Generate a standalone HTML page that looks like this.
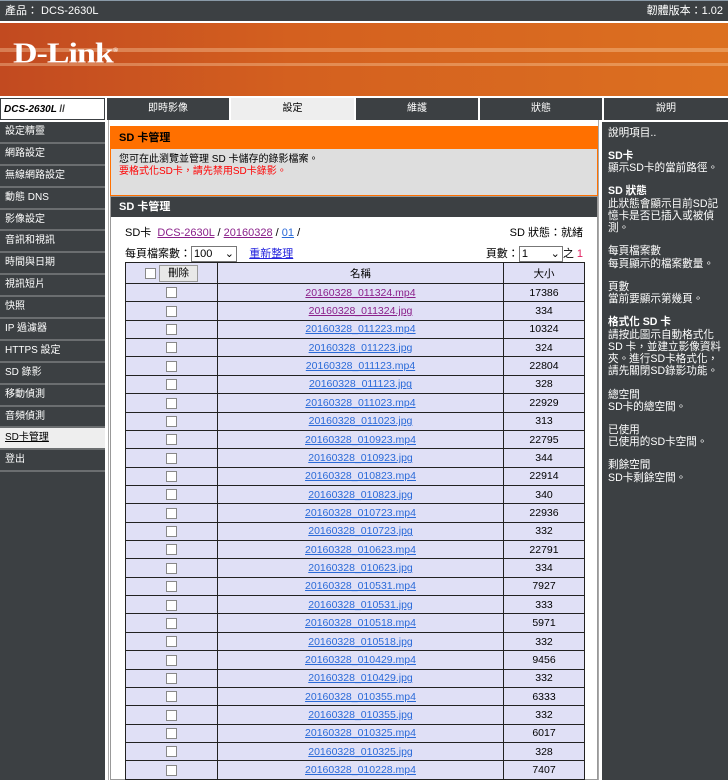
<!DOCTYPE html><html><head><meta charset="utf-8"><style>
*{margin:0;padding:0;box-sizing:border-box}
body{width:728px;height:780px;overflow:hidden;background:#fff;font-family:"Liberation Sans","Noto Sans CJK TC",sans-serif;font-size:11px;color:#000;position:relative}
.abs{position:absolute}
#top{left:0;top:0;width:728px;height:21px;background:#3c4043;color:#fff;font-size:11px;line-height:21px;border-top:1px solid #8a9aa8}
#banner{left:0;top:23px;width:728px;height:73px;background:linear-gradient(90deg,#c24a20 0%,#d4601f 40%,#dc7020 100%);overflow:hidden}
.stripe{position:absolute;left:0;width:100%;height:4px;background:rgba(255,220,180,.35)}
#logo{color:#fff;font-family:"Liberation Serif",serif;font-weight:bold;font-size:34px;letter-spacing:-1px;transform:scaleY(.85)}
.tab{position:absolute;top:98px;height:22px;background:#3c4043;color:#fff;text-align:center;line-height:22px;font-size:10px}
#side{left:0;top:122px;width:105px;height:658px;background:#3c4043}
.si{height:21.9px;line-height:20px;color:#fff;padding-left:5px;font-size:10px;border-bottom:2px solid #6b6e70}
#help{left:602px;top:122px;width:126px;height:658px;background:#3c4043;color:#fff;padding:5px 6px 5px 6px;font-size:10.6px;line-height:12.3px}
#help p{margin-bottom:10.8px}
a{color:#2a6ad8}
a.v{color:#8a1f8a}
table{border-collapse:collapse}
td{border:1px solid #222;background:#e0e0f6;height:18.37px;text-align:center;font-size:10.5px;padding:0}
.cb{display:inline-block;width:11px;height:11px;border:1px solid #888;background:#fff;vertical-align:middle}
</style></head><body>
<div id="top" class="abs"><span style="padding-left:5px">產品： DCS-2630L</span><span style="position:absolute;right:5px">韌體版本：1.02</span></div>
<div id="banner" class="abs"><div class="stripe" style="top:25px"></div><div class="stripe" style="top:40px;height:3px"></div>
<div id="logo" class="abs" style="top:12px;left:13px">D-Link<sup style="font-size:7px">®</sup></div></div>
<div class="tab" style="left:0;width:105px;background:#fff;border:1px solid #3c4043;color:#000;text-align:left;padding-left:3px;font-style:italic;font-weight:bold;font-size:10px">DCS-2630L <span style="font-style:normal;color:#333">//</span></div>
<div class="tab" style="left:107px;width:122px">即時影像</div>
<div class="tab" style="left:231px;width:123px;background:#eee;color:#000">設定</div>
<div class="tab" style="left:356px;width:122px">維護</div>
<div class="tab" style="left:480px;width:122px">狀態</div>
<div class="tab" style="left:604px;width:124px">說明</div>
<div id="side" class="abs">
<div class="si">設定精靈</div><div class="si">網路設定</div><div class="si">無線網路設定</div><div class="si">動態 DNS</div><div class="si">影像設定</div><div class="si">音訊和視訊</div><div class="si">時間與日期</div><div class="si">視訊短片</div><div class="si">快照</div><div class="si">IP 過濾器</div><div class="si">HTTPS 設定</div><div class="si">SD 錄影</div><div class="si">移動偵測</div><div class="si">音頻偵測</div><div class="si" style="background:#eee;color:#000;text-decoration:underline">SD卡管理</div><div class="si">登出</div>
</div>
<div class="abs" style="left:108px;top:120px;width:1px;height:660px;background:#aaa"></div>
<div class="abs" style="left:598px;top:120px;width:1px;height:660px;background:#aaa"></div>
<div class="abs" style="left:110px;top:126px;width:488px;height:70px;border:1px solid #ff7000;background:#dedede">
<div style="background:#ff7000;height:22px;line-height:22px;color:#000;font-weight:bold;padding-left:8px;font-size:11px">SD 卡管理</div>
<div style="padding:5px 8px;font-size:10px;line-height:12px">您可在此瀏覽並管理 SD 卡儲存的錄影檔案。<br><span style="color:#f00">要格式化SD卡，請先禁用SD卡錄影。</span></div></div>
<div class="abs" style="left:110px;top:196px;width:488px;height:584px;border:1px solid #999;background:#fff">
<div style="background:#3c4043;height:20px;line-height:20px;color:#fff;font-weight:bold;padding-left:8px">SD 卡管理</div>
<div class="abs" style="left:14px;top:27px">SD卡 &nbsp;<a class="v" href="#">DCS-2630L</a> / <a class="v" href="#">20160328</a> / <a href="#">01</a> /</div>
<div class="abs" style="right:14px;top:27px">SD 狀態：就緒</div>
<div class="abs" style="left:14px;top:48px">每頁檔案數：<span style="display:inline-block;width:46px;height:16px;border:1px solid #777;vertical-align:middle;padding-left:2px;line-height:14px">100 <span style="float:right;padding-right:2px">⌄</span></span> &nbsp; &nbsp;<a href="#" style="color:#22d">重新整理</a></div>
<div class="abs" style="right:14px;top:48px">頁數：<span style="display:inline-block;width:44px;height:16px;border:1px solid #777;vertical-align:middle;padding-left:2px;line-height:14px;text-align:left">1 <span style="float:right;padding-right:2px">⌄</span></span>之 <span style="color:#e02060">1</span></div>
<table class="abs" style="left:14px;top:65px;width:460px"><tbody id="tb">
<tr><td style="width:92px;height:21px"><span class="cb"></span> <span style="display:inline-block;border:1px solid #999;background:#e8e8e8;padding:0 8px;line-height:15px;vertical-align:middle">刪除</span></td><td style="width:286px">名稱</td><td>大小</td></tr>
</tbody></table></div>
<div id="help" class="abs"><p>說明項目..</p><p><b>SD卡</b><br>顯示SD卡的當前路徑。</p><p><b>SD 狀態</b><br>此狀態會顯示目前SD記<br>憶卡是否已插入或被偵<br>測。</p><p>每頁檔案數<br>每頁顯示的檔案數量。</p><p>頁數<br>當前要顯示第幾頁。</p><p><b>格式化 SD 卡</b><br>請按此圖示自動格式化<br>SD 卡，並建立影像資料<br>夾。進行SD卡格式化，<br>請先關閉SD錄影功能。</p><p>總空間<br>SD卡的總空間。</p><p>已使用<br>已使用的SD卡空間。</p><p>剩餘空間<br>SD卡剩餘空間。</p></div>
<script>
var d=[["011324.mp4",17386,1],["011324.jpg",334,1],["011223.mp4",10324],["011223.jpg",324],["011123.mp4",22804],["011123.jpg",328],["011023.mp4",22929],["011023.jpg",313],["010923.mp4",22795],["010923.jpg",344],["010823.mp4",22914],["010823.jpg",340],["010723.mp4",22936],["010723.jpg",332],["010623.mp4",22791],["010623.jpg",334],["010531.mp4",7927],["010531.jpg",333],["010518.mp4",5971],["010518.jpg",332],["010429.mp4",9456],["010429.jpg",332],["010355.mp4",6333],["010355.jpg",332],["010325.mp4",6017],["010325.jpg",328],["010228.mp4",7407]];
var h="";d.forEach(function(r){h+='<tr><td><span class="cb"></span></td><td><a '+(r[2]?'class="v" ':'')+'href="#">20160328_'+r[0]+'</a></td><td>'+r[1]+'</td></tr>';});
document.getElementById("tb").insertAdjacentHTML("beforeend",h);
</script>
</body></html>
